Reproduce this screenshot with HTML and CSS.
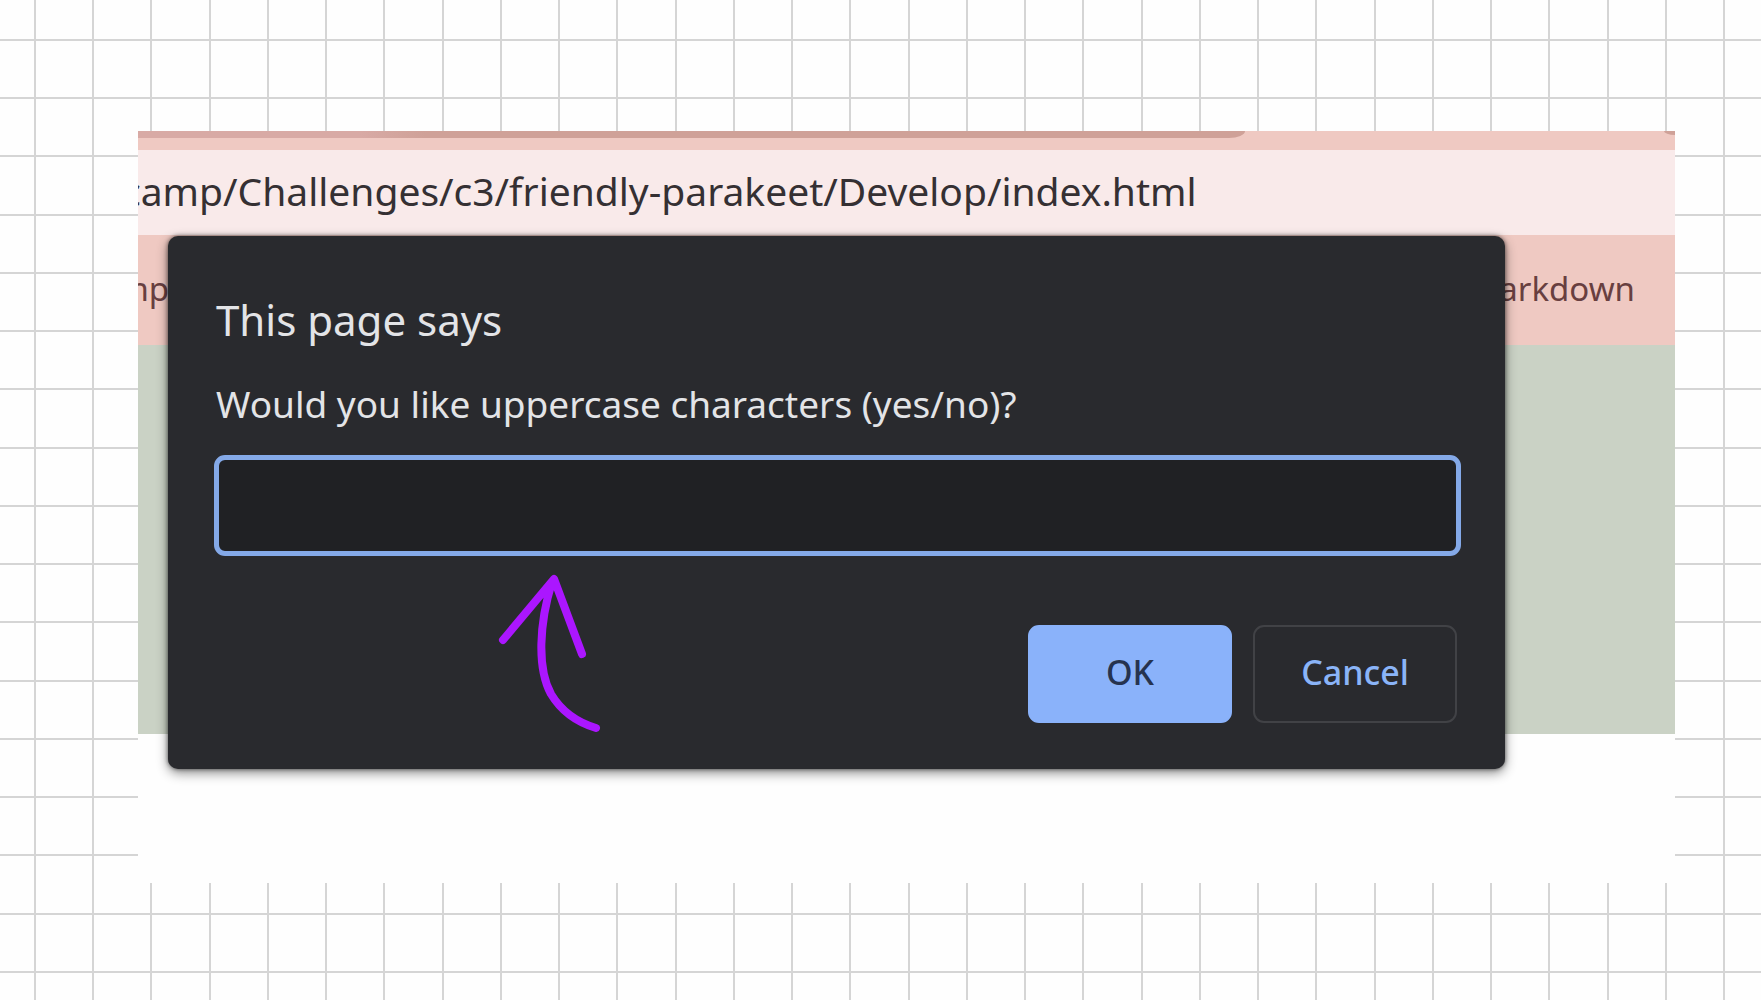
FILE: index.html
```html
<!DOCTYPE html>
<html lang="en">
<head>
<meta charset="utf-8">
<meta name="viewport" content="width=device-width, initial-scale=1">
<title>This page says</title>
<link rel="stylesheet" href="styles.css">
</head>
<body>
<main class="browser">
  <div class="tabs"><div class="tab"></div><div class="tab-next"></div></div>
  <div class="address"><span class="url">camp/Challenges/c3/friendly-parakeet/Develop/index.html</span></div>
  <nav class="bookmarks">
    <a class="bookmark bookmark-cut" href="#">mp</a>
    <a class="bookmark" href="#">Markdown</a>
  </nav>
  <div class="page"></div>

  <form class="dialog" role="dialog" aria-labelledby="title">
    <h1 class="title" id="title">This page says</h1>
    <label class="question" for="answer">Would you like uppercase characters (yes/no)?</label>
    <input class="answer" id="answer" type="text" autocomplete="off">
    <div class="actions">
      <button class="button button-ok" type="submit">OK</button>
      <button class="button button-cancel" type="button">Cancel</button>
    </div>
    <svg class="arrow" width="110" height="164" viewBox="0 0 110 164" aria-hidden="true">
      <path d="M8 67 59 6 87 81M57 9C44 51 42 95 56 121Q71 146 101 155"/>
    </svg>
  </form>
</main>
</body>
</html>
```
FILE: styles.css
```css
* {
  box-sizing: border-box;
}

body {
  --line: #d5d5d5;
  --grid: transparent 0 0, var(--line) 0 2px, transparent 2px 58px,
    var(--line) 58px 60px, transparent 60px 116px,
    var(--line) 116px 118px, transparent 118px 175px,
    var(--line) 175px 177px, transparent 177px;
  margin: 0;
  min-height: 100vh;
  padding: 131px 86px 117px 138px;
  background-color: #fefefe;
  background-image: linear-gradient(to right, var(--grid)), linear-gradient(to bottom, var(--grid));
  background-size: 233px 233px;
  background-position: 34px 0, 0 39px;
  font-family: "Noto Sans", "Open Sans", sans-serif;
}

.browser {
  position: relative;
  min-height: 752px;
  overflow: hidden;
  background: #fefefe;
}

.tabs {
  display: flex;
  justify-content: space-between;
  height: 19px;
  background: #efc9c2;
}

.tab {
  width: 72%;
  height: 7px;
  border-bottom-right-radius: 16px 7px;
  background: linear-gradient(to right, #d8aaa5 20%, #cfa198 26%);
}

.tab-next {
  width: 11px;
  height: 4px;
  border-bottom-left-radius: 11px 4px;
  background: #cfa198;
}

.address {
  display: flex;
  align-items: center;
  height: 85px;
  padding-bottom: 4px;
  background: #f9eaea;
}

.url {
  margin-left: -16px;
  color: #353033;
  font-size: 39px;
  white-space: nowrap;
}

.bookmarks {
  display: flex;
  align-items: center;
  justify-content: space-between;
  height: 110px;
  padding: 0 40px 4px 0;
  background: #efc9c2;
}

.bookmark {
  color: #683f40;
  font-size: 33px;
  text-decoration: none;
}

.bookmark-cut {
  margin-left: -20px;
}

.page {
  height: 389px;
  background: #cad2c5;
}

.dialog {
  position: absolute;
  top: 105px;
  left: 30px;
  right: 170px;
  display: flex;
  flex-direction: column;
  height: 533px;
  padding: 56px 44px 46px 46px;
  border-radius: 10px;
  background: #292a2e;
  box-shadow: 0 4px 12px rgb(0 0 0 / 45%), 0 0 4px rgb(0 0 0 / 55%);
}

.title {
  margin: 0 0 32px;
  padding-left: 2px;
  color: #e3e4e7;
  font-size: 42px;
  font-weight: 400;
  line-height: 56px;
}

.question {
  padding-left: 2px;
  color: #e3e4e7;
  font-size: 37px;
  line-height: 48px;
}

.answer {
  height: 101px;
  margin-top: 27px;
  padding: 0 20px;
  border: 5px solid #84a9e8;
  border-radius: 11px;
  outline: 0;
  background: #202124;
  color: #e3e4e7;
  font: inherit;
  font-size: 37px;
}

.actions {
  display: flex;
  justify-content: flex-end;
  gap: 21px;
  margin-top: auto;
  padding-right: 4px;
}

.button {
  width: 204px;
  height: 98px;
  padding: 0 0 5px;
  border: 2px solid #414246;
  border-radius: 11px;
  background: transparent;
  color: #8ab4f8;
  font: inherit;
  font-size: 34px;
  font-weight: 500;
}

.button-ok {
  border-color: #8ab2fa;
  background: #8ab2fa;
  color: #26334f;
}

.arrow {
  position: absolute;
  top: 337px;
  left: 327px;
  fill: none;
  stroke: #ab16ff;
  stroke-width: 8;
  stroke-linecap: round;
  stroke-linejoin: round;
}
```
